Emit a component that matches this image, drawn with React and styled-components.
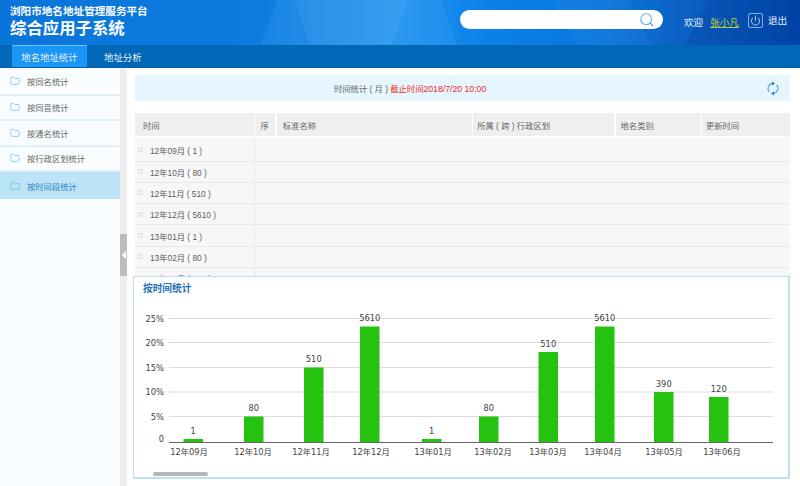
import React from 'react';
import styled, { createGlobalStyle } from 'styled-components';
import { Folder, Power } from 'lucide-react';

const GlobalStyle = createGlobalStyle`
    html, body {
        margin: 0;
        height: 100%;
        overflow: hidden;
        background: #fff;
    }
    body {
        font-family: "Liberation Sans", "Noto Sans CJK SC", sans-serif;
        font-size: 8.3px;
        color: #666;
    }
    * { box-sizing: border-box; }
`;

const Page = styled.div`
    width: 800px;
    height: 486px;
    display: flex;
    flex-direction: column;
`;

const Header = styled.header`
    height: 45px;
    display: flex;
    align-items: flex-start;
    background-image:
        linear-gradient(118deg, transparent 86%, rgba(0, 30, 120, 0.14) 86%),
        linear-gradient(62deg, transparent 70%, rgba(255, 255, 255, 0.035) 70%, rgba(255, 255, 255, 0.035) 79%, transparent 79%),
        linear-gradient(110deg, transparent 34%, rgba(255, 255, 255, 0.06) 34%, rgba(255, 255, 255, 0.06) 50%, transparent 50%),
        linear-gradient(70deg, transparent 38%, rgba(255, 255, 255, 0.05) 38%, rgba(255, 255, 255, 0.05) 56%, transparent 56%),
        linear-gradient(90deg, #0a75d8 0%, #0b7be0 32%, #1f92ef 50%, #0a80e8 62%, #0a76de 75%, #0c62c4 85%, #0048ad 100%);
`;

const TitleBlock = styled.div`
    width: 460px;
    padding: 4px 0 0 10px;
    color: #fff;
    font-weight: 700;
`;

const TopTitle = styled.div`
    font-size: 10.6px;
    line-height: 15px;
`;

const SystemName = styled.div`
    font-size: 16.4px;
    line-height: 19px;
`;

const SearchBox = styled.div`
    width: 203px;
    height: 19px;
    margin-top: 10px;
    padding-right: 9px;
    display: flex;
    align-items: center;
    justify-content: flex-end;
    background: #fff;
    border-radius: 10px;
`;

const UserArea = styled.div`
    display: flex;
    align-items: flex-start;
    margin-left: 21px;
    font-size: 9.6px;
    color: #e4f1fb;
`;

const Welcome = styled.span`
    margin-top: 16px;
    line-height: 14px;
`;

const UserName = styled.a`
    margin: 16px 9px 0 7px;
    line-height: 14px;
    color: #b6d433;
    text-decoration: underline;
`;

const PowerBox = styled.span`
    width: 15px;
    height: 15px;
    margin-top: 13px;
    display: flex;
    align-items: center;
    justify-content: center;
    border: 1px solid #7fb0e2;
    border-radius: 2px;
    color: #fff;
`;

const Logout = styled.span`
    margin: 14px 0 0 5px;
    line-height: 14px;
`;

const Nav = styled.nav`
    height: 23px;
    padding-left: 12px;
    display: flex;
    background: #0068b7;
    border-bottom: 1px solid #0a5fa8;
`;

const NavTab = styled.a`
    width: ${({ $active }) => ($active ? '75px' : 'auto')};
    margin-left: ${({ $active }) => ($active ? '0' : '17px')};
    display: flex;
    align-items: center;
    justify-content: center;
    color: #e6f3fc;
    font-size: 9.4px;
    background: ${({ $active }) => ($active ? '#1a96f4' : 'transparent')};
    border-top: 1px solid ${({ $active }) => ($active ? '#6cc0fa' : 'transparent')};
`;

const Body = styled.div`
    flex: 1;
    display: flex;
    min-height: 0;
`;

const Sidebar = styled.aside`
    width: 120px;
    background: #f9fdff;
`;

const SideItem = styled.div`
    height: 25.5px;
    padding-left: 10px;
    display: flex;
    align-items: center;
    gap: 7px;
    background: ${({ $active }) => ($active ? '#bde3f6' : 'transparent')};
    color: ${({ $active }) => ($active ? '#2b86c8' : '#666')};
    border-bottom: 2px solid ${({ $active }) => ($active ? '#bde3f6' : '#e2f0f8')};
    svg { color: #5ab6ee; flex-shrink: 0; }
    &:first-child { height: 27.5px; }
    &:last-child { height: 27px; border-bottom: 0; }
`;

const Splitter = styled.div`
    width: 7px;
    padding-top: 166px;
    background: #eeeeee;
`;

const SplitHandle = styled.div`
    width: 7px;
    height: 42px;
    display: flex;
    align-items: center;
    justify-content: center;
    background: #bcbcbc;
    &::before {
        content: '';
        border-style: solid;
        border-width: 4px 4px 4px 0;
        border-color: transparent #fff transparent transparent;
    }
`;

const Content = styled.main`
    flex: 1;
    padding: 7px 10px 0 8px;
    min-width: 0;
`;

const InfoBar = styled.div`
    height: 26px;
    padding: 0 11px 0 199px;
    display: flex;
    align-items: center;
    white-space: pre;
    background: #e6f5fe;
    color: #666;
`;

const Deadline = styled.span`
    color: #ee2a2a;
`;

const DeadlineDate = styled.span`
    font-size: 8.7px;
`;

const RefreshBtn = styled.span`
    margin-left: auto;
    display: flex;
`;

const TableWrap = styled.div`
    height: 163px;
    margin-top: 12px;
    overflow: hidden;
`;

const HeadRow = styled.div`
    height: 23px;
    display: grid;
    grid-template-columns: 119px 20px 195px 141px 85px 1fr;
    column-gap: 1.4px;
    background: #fff;
`;

const HeadCell = styled.div`
    padding-left: ${({ $pad }) => $pad}px;
    display: flex;
    align-items: center;
    white-space: pre;
    background: #efefef;
    color: #666;
`;

const TableBody = styled.div`
    margin-top: 1px;
    padding-top: 2px;
    background: #f8f7f8;
`;

const Row = styled.div`
    height: ${({ $first }) => ($first ? '22.5px' : '21.3px')};
    display: flex;
    border-bottom: 1px solid #e9e8e9;
`;

const TimeCell = styled.div`
    width: 120px;
    padding-left: 3px;
    display: flex;
    align-items: center;
    gap: 7px;
    white-space: pre;
    border-right: 1px solid #e9e8e9;
    color: #5c5c5c;
`;

const ChartPanel = styled.section`
    height: 203px;
    margin-left: -2px;
    padding: 5px 0 0 9px;
    background: #fff;
    border: 1px solid #bcdff2;
    border-bottom-width: 2px;
    border-right-width: 2px;
    position: relative;
`;

const ChartTitle = styled.h3`
    margin: 0;
    font-size: 9.7px;
    line-height: 14px;
    font-weight: 700;
    color: #1f70b4;
`;

const ChartSvg = styled.svg`
    display: block;
    width: 655px;
    height: 178px;
    margin: 4px 0 0 -9px;
    font-family: "DejaVu Sans", "Noto Sans CJK SC", sans-serif;
    font-size: 8.3px;
    fill: #444;
`;

const ScrollThumb = styled.div`
    position: absolute;
    left: 19px;
    bottom: 1px;
    width: 55px;
    height: 4px;
    background: #b6b6b6;
    border-radius: 2px;
`;

const sideItems = ['按同名统计', '按同音统计', '按通名统计', '按行政区划统计', '按时间段统计'];

const headCols = [
    ['时间', 8],
    ['序', 5],
    ['标准名称', 6],
    ['所属 ( 跨 ) 行政区划', 4],
    ['地名类别', 5],
    ['更新时间', 4],
];

const timeRows = ['12年09月 ( 1 )', '12年10月 ( 80 )', '12年11月 ( 510 )', '12年12月 ( 5610 )', '13年01月 ( 1 )', '13年02月 ( 80 )', '13年03月 ( 510 )'];

const grid = [
    ['25%', 318.5],
    ['20%', 342.5],
    ['15%', 367.5],
    ['10%', 392],
    ['5%', 416.5],
];

const bars = [
    { label: '12年09月', value: '1', x: 183.5, top: 439, lx: 189 },
    { label: '12年10月', value: '80', x: 244, top: 416.5, lx: 253 },
    { label: '12年11月', value: '510', x: 304, top: 367.5, lx: 311 },
    { label: '12年12月', value: '5610', x: 360, top: 326.5, lx: 371 },
    { label: '13年01月', value: '1', x: 422, top: 439, lx: 433 },
    { label: '13年02月', value: '80', x: 479, top: 416.5, lx: 493 },
    { label: '13年03月', value: '510', x: 538.5, top: 352, lx: 548 },
    { label: '13年04月', value: '5610', x: 595, top: 326.5, lx: 603 },
    { label: '13年05月', value: '390', x: 654, top: 392, lx: 664 },
    { label: '13年06月', value: '120', x: 709, top: 397, lx: 722 },
];

function Grip() {
    return (
        <svg width="5" height="5" viewBox="0 0 5 5" fill="#e0e0e0">
            <rect width="2" height="2" />
            <rect x="3" width="2" height="2" />
            <rect y="3" width="2" height="2" />
            <rect x="3" y="3" width="2" height="2" />
        </svg>
    );
}

function SearchGlyph() {
    return (
        <svg width="14" height="14" viewBox="0 0 14 14" fill="none">
            <circle cx="6.2" cy="6.2" r="5.4" stroke="#62b5ec" strokeWidth="1.1" />
            <path d="M10.2 10.2 L13.2 13.2" stroke="#3d8cc6" strokeWidth="1.1" />
        </svg>
    );
}

function RefreshGlyph() {
    return (
        <svg width="12" height="15" viewBox="0 0 12 15" fill="none">
            <path d="M5.5 2.6 A5 5 0 0 0 2.4 11" stroke="#4ca6e6" strokeWidth="1.1" />
            <path d="M6.5 12.4 A5 5 0 0 0 9.6 4" stroke="#4ca6e6" strokeWidth="1.1" />
            <path d="M5 0.6 L8 2.6 L5 4.6 Z" fill="#2a7cc0" />
            <path d="M7 10.4 L4 12.4 L7 14.4 Z" fill="#2a7cc0" />
        </svg>
    );
}

function BarChart() {
    return (
        <ChartSvg viewBox="134 300 655 178">
            {grid.map(([label, y]) => (
                <g key={label}>
                    <line x1="169" x2="773" y1={y} y2={y} stroke="#dcdcdc" />
                    <text x="164" y={y + 3} textAnchor="end">{label}</text>
                </g>
            ))}
            <text x="164" y="441.5" textAnchor="end">0</text>
            {bars.map((b) => (
                <g key={b.label}>
                    <rect x={b.x} y={b.top} width="19.5" height={442 - b.top} fill="#25c210" />
                    <text x={b.x + 9.75} y={b.top - 5.5} textAnchor="middle">{b.value}</text>
                    <text x={b.lx} y="454.5" textAnchor="middle">{b.label}</text>
                </g>
            ))}
            <line x1="169" x2="773" y1="442.5" y2="442.5" stroke="#666" />
        </ChartSvg>
    );
}

export default function App() {
    return (
        <Page>
            <GlobalStyle />
            <Header>
                <TitleBlock>
                    <TopTitle>浏阳市地名地址管理服务平台</TopTitle>
                    <SystemName>综合应用子系统</SystemName>
                </TitleBlock>
                <SearchBox>
                    <SearchGlyph />
                </SearchBox>
                <UserArea>
                    <Welcome>欢迎</Welcome>
                    <UserName>张小凡</UserName>
                    <PowerBox>
                        <Power size={11} strokeWidth={1.5} />
                    </PowerBox>
                    <Logout>退出</Logout>
                </UserArea>
            </Header>
            <Nav>
                <NavTab $active>地名地址统计</NavTab>
                <NavTab>地址分析</NavTab>
            </Nav>
            <Body>
                <Sidebar>
                    {sideItems.map((name, i) => (
                        <SideItem key={name} $active={i === sideItems.length - 1}>
                            <Folder size={10} strokeWidth={1.5} />
                            {name}
                        </SideItem>
                    ))}
                </Sidebar>
                <Splitter>
                    <SplitHandle />
                </Splitter>
                <Content>
                    <InfoBar>
                        {'时间统计 ( 月 ) '}
                        <Deadline>
                            截止时间<DeadlineDate>2018/7/20 10:00</DeadlineDate>
                        </Deadline>
                        <RefreshBtn>
                            <RefreshGlyph />
                        </RefreshBtn>
                    </InfoBar>
                    <TableWrap>
                        <HeadRow>
                            {headCols.map(([title, pad]) => (
                                <HeadCell key={title} $pad={pad}>{title}</HeadCell>
                            ))}
                        </HeadRow>
                        <TableBody>
                            {timeRows.map((t, i) => (
                                <Row key={t} $first={i === 0}>
                                    <TimeCell>
                                        <Grip />
                                        {t}
                                    </TimeCell>
                                </Row>
                            ))}
                        </TableBody>
                    </TableWrap>
                    <ChartPanel>
                        <ChartTitle>按时间统计</ChartTitle>
                        <BarChart />
                        <ScrollThumb />
                    </ChartPanel>
                </Content>
            </Body>
        </Page>
    );
}
